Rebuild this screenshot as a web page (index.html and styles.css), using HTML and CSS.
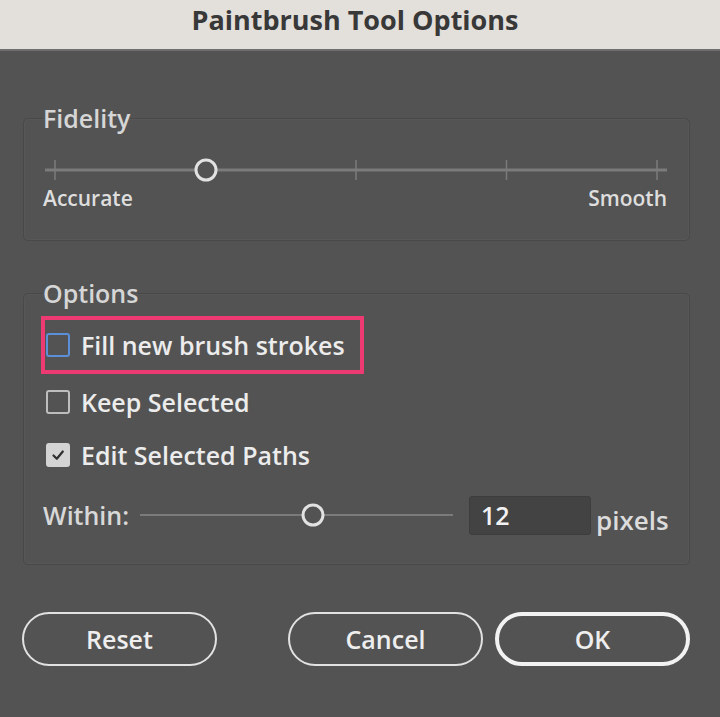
FILE: index.html
```html
<!DOCTYPE html>
<html lang="en">
<head>
<meta charset="utf-8">
<title>Paintbrush Tool Options</title>
<link rel="stylesheet" href="styles.css">
</head>
<body>
<div class="dialog">
  <header class="titlebar">Paintbrush Tool Options</header>
  <main class="content">
    <fieldset class="group group-fidelity">
      <legend>Fidelity</legend>
      <svg class="fidelity-slider" width="626" height="24" viewBox="0 0 626 24" aria-hidden="true">
        <line x1="2" y1="12" x2="624" y2="12" stroke="#7b7b7b" stroke-width="3"/>
        <g stroke="#7b7b7b" stroke-width="1.5">
          <line x1="12" y1="2" x2="12" y2="22"/>
          <line x1="313" y1="2" x2="313" y2="22"/>
          <line x1="463.5" y1="2" x2="463.5" y2="22"/>
          <line x1="614" y1="2" x2="614" y2="22"/>
        </g>
        <circle cx="163" cy="12" r="10" fill="#535353" stroke="#e2e2e2" stroke-width="3"/>
      </svg>
      <div class="scale-labels"><span>Accurate</span><span>Smooth</span></div>
    </fieldset>

    <fieldset class="group group-options">
      <legend>Options</legend>
      <div class="row highlight">
        <span class="box box-focus"></span>
        <span>Fill new brush strokes</span>
      </div>
      <div class="row">
        <span class="box"></span>
        <span>Keep Selected</span>
      </div>
      <div class="row">
        <span class="box box-checked">
          <svg width="16" height="16" viewBox="0 0 16 16" aria-hidden="true"><path d="M3.5 8.5 L6.8 11.8 L12.8 4.5" fill="none" stroke="#2f2f2f" stroke-width="2.2" stroke-linecap="round" stroke-linejoin="round"/></svg>
        </span>
        <span>Edit Selected Paths</span>
      </div>
      <div class="within">
        <span class="within-label">Within:</span>
        <svg class="within-slider" width="316" height="24" viewBox="0 0 316 24" aria-hidden="true">
          <line x1="0" y1="12" x2="313" y2="12" stroke="#7b7b7b" stroke-width="2"/>
          <circle cx="173" cy="12" r="10" fill="#535353" stroke="#e2e2e2" stroke-width="3"/>
        </svg>
        <span class="num-input">12</span>
        <span class="unit">pixels</span>
      </div>
    </fieldset>

    <div class="buttons">
      <button class="btn btn-reset">Reset</button>
      <button class="btn btn-cancel">Cancel</button>
      <button class="btn btn-ok">OK</button>
    </div>
  </main>
</div>
</body>
</html>
```

FILE: styles.css
```css
html, body {
  margin: 0;
  padding: 0;
  background: #535353;
}

body {
  width: 720px;
  height: 717px;
  overflow: hidden;
  font-family: "Open Sans", "Noto Sans", "Liberation Sans", sans-serif;
  font-weight: 600;
  color: #e4e4e4;
}

.dialog {
  display: flex;
  flex-direction: column;
  height: 717px;
}

.titlebar {
  height: 49px;
  background: #e3dfdb;
  border-bottom: 2px solid #6e6e6e;
  color: #383838;
  font-weight: 700;
  font-size: 27px;
  line-height: 40px;
  text-align: center;
  padding-right: 10px;
}

.content {
  padding: 52px 30px 0 23px;
  display: flex;
  flex-direction: column;
}

.group {
  margin: 0;
  border: 1px solid #494949;
  border-radius: 5px;
  padding: 0 20px 0 19px;
  min-width: 0;
  box-shadow: inset 0 0 0 1px #575757;
}

.group legend {
  padding: 0;
  font-size: 25px;
  line-height: 30px;
  color: #d6d6d6;
}

.group-fidelity {
  height: 136px;
}

.fidelity-slider {
  display: block;
  margin-top: 25px;
}

.scale-labels {
  display: flex;
  justify-content: space-between;
  font-size: 21px;
  line-height: 26px;
  margin-top: 3px;
  width: 624px;
  color: #dedede;
}

.group-options {
  margin-top: 37px;
  height: 285px;
}

.row {
  display: flex;
  align-items: center;
  gap: 11px;
  height: 50px;
  margin-left: 3px;
  font-size: 25px;
  color: #ececec;
}

.row + .row {
  margin-top: 3px;
}

.row.highlight {
  margin-top: 8px;
  margin-left: -2px;
  width: 314px;
  height: 50px;
  border: 4px solid #ee3a72;
  padding-left: 1px;
}

.box {
  width: 20px;
  height: 20px;
  border: 2px solid #bdbdbd;
  border-radius: 3px;
  flex: none;
  display: flex;
  align-items: center;
  justify-content: center;
}

.box-focus {
  border-color: #5b8fd8;
}

.box-checked {
  background: #d4d4d4;
  border-color: #d4d4d4;
}

.within {
  display: flex;
  align-items: center;
  margin-top: 15px;
  height: 40px;
}

.within-label {
  font-size: 25px;
  color: #d8d8d8;
  width: 97px;
}

.within-slider {
  display: block;
}

.num-input {
  box-sizing: border-box;
  width: 122px;
  height: 39px;
  margin-left: 13px;
  background: #434343;
  border: 1px solid #3d3d3d;
  border-radius: 3px;
  font-size: 25px;
  line-height: 37px;
  padding-left: 11px;
  color: #f2f2f2;
}

.unit {
  font-size: 26px;
  color: #dcdcdc;
  margin-left: 5px;
  margin-top: 9px;
}

.buttons {
  display: flex;
  margin-top: 47px;
  margin-left: -1px;
}

.btn {
  box-sizing: border-box;
  width: 195px;
  height: 54px;
  background: transparent;
  border: 2px solid #e2e2e2;
  border-radius: 27px;
  color: #eeeeee;
  font-family: inherit;
  font-weight: 600;
  font-size: 25px;
  padding: 0;
}

.btn-cancel {
  margin-left: 71px;
}

.btn-ok {
  margin-left: 12px;
  border-width: 4px;
  border-color: #f2f2f2;
}
```
